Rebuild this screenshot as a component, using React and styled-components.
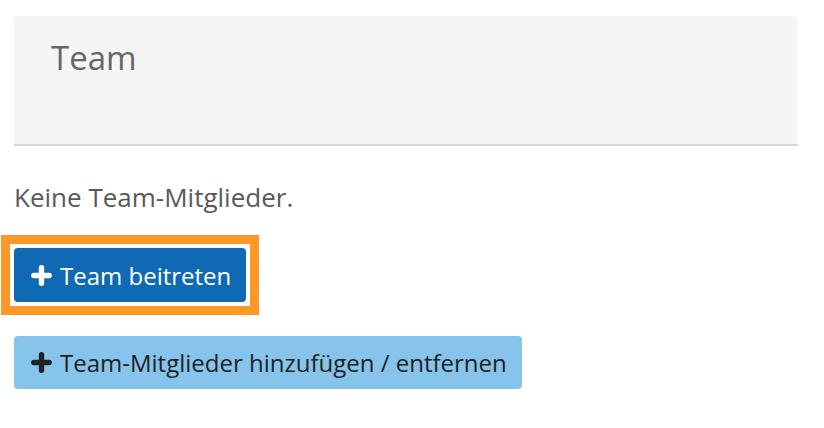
import styled, { createGlobalStyle } from "styled-components";

const GlobalStyle = createGlobalStyle`
  html, body {
    margin: 0;
    padding: 0;
    background: #fff;
  }
  body {
    font-family: "Open Sans", "Noto Sans", sans-serif;
    color: #555;
  }
`;

const Page = styled.main`
  width: 824px;
  height: 428px;
  box-sizing: border-box;
  padding: 16px 26px 0 14px;
  display: flex;
  flex-direction: column;
  align-items: stretch;
`;

const PanelHead = styled.section`
  background: #f5f5f5;
  border-bottom: 2px solid #d6d6d6;
  border-radius: 4px 4px 0 0;
  height: 130px;
  box-sizing: border-box;
  padding: 25px 37px;
`;

const Title = styled.h2`
  margin: 0;
  font-weight: 400;
  font-size: 33px;
  line-height: 1;
  color: #666;
`;

const Empty = styled.p`
  margin: 33px 0 0;
  font-size: 26px;
  line-height: 36px;
  color: #595959;
`;

const Actions = styled.div`
  display: flex;
  flex-direction: column;
  align-items: flex-start;
  margin-top: 20px;
  gap: 21px;
`;

/* keyboard focus highlight drawn around the active button */
const FocusRing = styled.div`
  display: flex;
  margin-left: -13px;
  padding: 4px;
  border: 9px solid #fd9828;
`;

const Button = styled.button`
  display: inline-flex;
  align-items: center;
  gap: 8px;
  height: ${(p) => (p.$secondary ? "53px" : "54px")};
  padding: 0 15px 0 17px;
  border: none;
  border-radius: 4px;
  font-family: inherit;
  font-size: 24px;
  cursor: pointer;
  background: ${(p) => (p.$secondary ? "#86c4ec" : "#0f6ab3")};
  color: ${(p) => (p.$secondary ? "#222" : "#fff")};
`;

const PlusIcon = ({ color }) => (
  <svg width="21" height="21" viewBox="0 0 21 21" aria-hidden="true">
    <path
      d="M10.5 2.8v15.4M2.8 10.5h15.4"
      stroke={color}
      strokeWidth="5.4"
      strokeLinecap="round"
    />
  </svg>
);

export default function App() {
  return (
    <>
      <GlobalStyle />
      <Page>
        <PanelHead>
          <Title>Team</Title>
        </PanelHead>
        <Empty>Keine Team-Mitglieder.</Empty>
        <Actions>
          <FocusRing>
            <Button>
              <PlusIcon color="#fff" />
              Team beitreten
            </Button>
          </FocusRing>
          <Button $secondary>
            <PlusIcon color="#222" />
            Team-Mitglieder hinzufügen / entfernen
          </Button>
        </Actions>
      </Page>
    </>
  );
}
